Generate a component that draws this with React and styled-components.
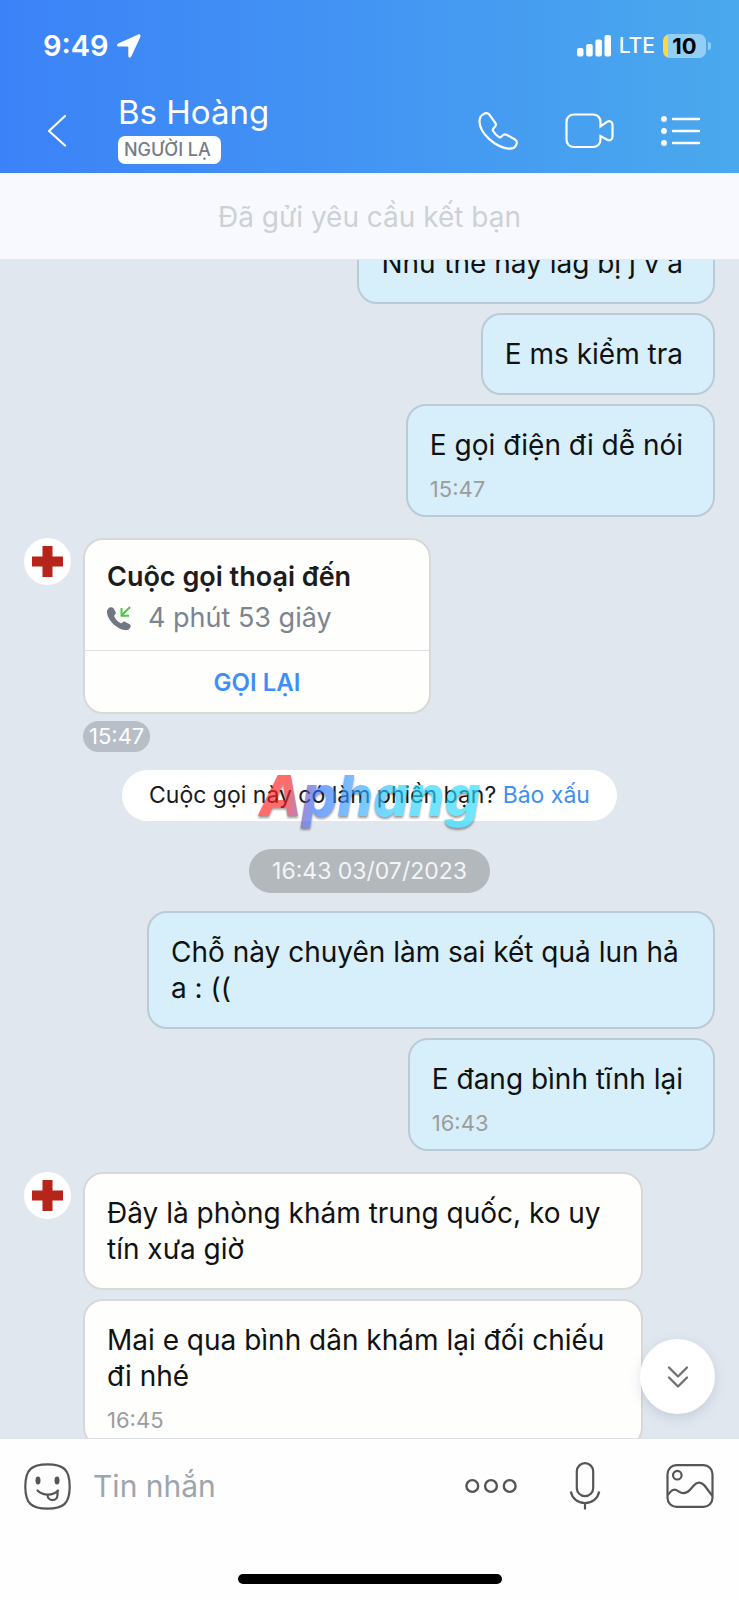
import { useLayoutEffect, useRef } from 'react';
import styled, { createGlobalStyle } from 'styled-components';

const GlobalStyle = createGlobalStyle`
    * {
        box-sizing: border-box;
    }
    body {
        margin: 0;
        font-family: Inter, "Noto Sans", sans-serif;
        background: #fefefe;
    }
    button, input {
        font-family: inherit;
    }
`;

const Screen = styled.div`
    display: flex;
    flex-direction: column;
    height: 100vh;
    overflow: hidden;
`;

const Header = styled.header`
    background: linear-gradient(90deg, #3b82f8 0%, #4395f3 50%, #4aa9ed 100%);
    color: white;
`;

const StatusBar = styled.div`
    display: flex;
    align-items: center;
    justify-content: space-between;
    height: 88px;
    padding: 3px 28px 0 43px;
`;

const StatusGroup = styled.div`
    display: flex;
    align-items: center;
    gap: 8px;
`;

const Clock = styled.span`
    font-size: 29px;
    font-weight: 600;
`;

const Network = styled.span`
    font-size: 21px;
    font-weight: 500;
`;

const Battery = styled.span`
    position: relative;
    display: flex;
    align-items: center;
    justify-content: center;
    width: 43px;
    height: 24px;
    margin-right: 5px;
    border-radius: 7px;
    background: linear-gradient(90deg, #fcd844 5px, #93cff4 5px);
    color: black;
    font-size: 22px;
    font-weight: 700;

    &::after {
        content: "";
        position: absolute;
        right: -5px;
        top: 8px;
        width: 3px;
        height: 8px;
        border-radius: 0 3px 3px 0;
        background: #93cff4;
    }
`;

const NavBar = styled.div`
    display: flex;
    align-items: center;
    height: 85px;
    padding: 0 38px 0 46px;
`;

const IconButton = styled.button`
    display: flex;
    padding: 0;
    border: none;
    background: none;
    color: inherit;
    cursor: pointer;
`;

const TitleBlock = styled.div`
    flex: 1;
    display: flex;
    flex-direction: column;
    align-items: flex-start;
    gap: 2px;
    margin-left: 50px;
    padding-bottom: 7px;
`;

const Title = styled.h1`
    margin: 0;
    font-size: 33px;
    line-height: 44px;
    font-weight: 400;
`;

const Badge = styled.span`
    padding: 0 10px 0 6px;
    border-radius: 7px;
    background: white;
    color: #767c86;
    font-size: 18px;
    line-height: 28px;
    font-weight: 500;
`;

const NavActions = styled.div`
    display: flex;
    align-items: center;
    gap: 47px;
`;

const RequestBanner = styled.div`
    padding: 26px 0 24px;
    border-bottom: 1px solid #e6e8ec;
    background: #f8f9fe;
    color: #ccd1d5;
    font-size: 28px;
    line-height: 36px;
    text-align: center;
`;

const ChatArea = styled.main`
    position: relative;
    flex: 1;
    min-height: 0;
    background: #e1e7ef;
`;

const MessageList = styled.div`
    display: flex;
    flex-direction: column;
    gap: 21px;
    height: 100%;
    padding: 0 24px 24px;
    overflow-y: auto;
    scrollbar-width: none;
`;

const Group = styled.section`
    flex: none;
    display: flex;
    align-items: flex-start;
    gap: 12px;
`;

const Stack = styled.div`
    flex: 1;
    display: flex;
    flex-direction: column;
    align-items: ${props => props.$mine ? 'flex-end' : 'flex-start'};
    gap: ${props => props.$tight ? '7px' : '9px'};
`;

const Bubble = styled.div`
    max-width: ${props => props.$mine ? '568px' : '560px'};
    padding: 21px 30px ${props => props.$timed ? '14px' : '21px'} 22px;
    border: 2px solid ${props => props.$mine ? '#b9cbd5' : '#d8d8d8'};
    border-radius: 20px;
    background: ${props => props.$mine ? '#d6effb' : '#fefefd'};
    color: #111;
`;

const MessageText = styled.p`
    margin: 0;
    font-size: 28px;
    line-height: 36px;
`;

const Time = styled.time`
    display: block;
    margin-top: 14px;
    color: #9c9c9c;
    font-size: 22px;
    line-height: 24px;
`;

const Avatar = styled.div`
    display: flex;
    align-items: center;
    justify-content: center;
    width: 47px;
    height: 47px;
    border-radius: 50%;
    background: white;
`;

const CallCard = styled.div`
    width: 348px;
    border: 2px solid #d8d8d8;
    border-radius: 20px;
    background: #fefefd;
    overflow: hidden;
`;

const CallInfo = styled.div`
    padding: 17px 22px 11px;
`;

const CallTitle = styled.h2`
    margin: 0;
    color: #1c1c1c;
    font-size: 27px;
    line-height: 40px;
    font-weight: 600;
`;

const CallLength = styled.p`
    display: flex;
    align-items: center;
    gap: 17px;
    margin: 0;
    color: #7d848e;
    font-size: 27px;
    line-height: 42px;
`;

const CallBack = styled.button`
    display: block;
    width: 100%;
    padding: 2px 0 0;
    border: none;
    border-top: 1px solid #dcdfe3;
    background: none;
    color: #3e8ff5;
    font-size: 24px;
    line-height: 59px;
    font-weight: 600;
    cursor: pointer;
`;

const TimeChip = styled.time`
    padding: 0 6px;
    border-radius: 16px;
    background: #b7bec7;
    color: white;
    font-size: 22px;
    line-height: 31px;
`;

const Notice = styled.div`
    flex: none;
    display: flex;
    flex-direction: column;
    align-items: center;
    gap: 28px;
    margin: -3px 0;
`;

const ReportPill = styled.p`
    position: relative;
    margin: 0;
    padding: 0 27px;
    border-radius: 26px;
    background: white;
    color: #1a1a1a;
    font-size: 23px;
    line-height: 51px;
`;

const ReportLink = styled.a`
    color: #3e8ff5;
    text-decoration: none;
`;

const Watermark = styled.span`
    position: absolute;
    top: -6px;
    left: 50%;
    transform: translateX(-50%);
    background: linear-gradient(100deg, #ff1f1f 14%, #2f6bff 27%, #35a5ff 45%, #22d3ff 65%, #22dcff 100%);
    background-clip: text;
    color: transparent;
    font-size: 56px;
    line-height: 64px;
    font-weight: 800;
    font-style: italic;
    opacity: 0.65;
    filter: drop-shadow(0 2px 1px rgba(0, 0, 0, 0.6));
    pointer-events: none;
`;

const DateChip = styled.time`
    padding: 0 23px;
    border-radius: 22px;
    background: #b3b8bd;
    color: #f4f5f6;
    font-size: 23px;
    line-height: 44px;
`;

const ScrollDown = styled.button`
    position: absolute;
    right: 24px;
    bottom: 24px;
    display: flex;
    align-items: center;
    justify-content: center;
    width: 75px;
    height: 75px;
    padding: 0;
    border: none;
    border-radius: 50%;
    background: white;
    color: #707070;
    box-shadow: 0 4px 12px rgba(80, 95, 130, 0.18);
    cursor: pointer;
`;

const Composer = styled.footer`
    border-top: 1px solid #dfe2e6;
    background: #fefefe;
    color: #555;
`;

const InputRow = styled.div`
    display: flex;
    align-items: center;
    height: 94px;
    padding: 0 25px 0 24px;
`;

const MessageInput = styled.input`
    flex: 1;
    min-width: 0;
    margin-left: 22px;
    padding: 0;
    border: none;
    outline: none;
    background: none;
    color: #111;
    font-size: 30px;
    line-height: 40px;

    &::placeholder {
        color: #9da5ad;
        opacity: 1;
    }
`;

const ComposerActions = styled.div`
    display: flex;
    align-items: center;
    gap: 52px;
`;

const PhotoButton = styled(IconButton)`
    margin-left: 65px;
`;

const HomeIndicator = styled.div`
    width: 264px;
    height: 10px;
    margin: 41px auto 16px;
    border-radius: 5px;
    background: black;
`;

function CrossAvatar() {
    return (
        <Avatar>
            <svg width="31" height="31" viewBox="0 0 31 31" aria-hidden="true">
                <path d="M10.5 0h10v10.5H31v10H20.5V31h-10V20.5H0v-10h10.5z" fill="#b72419" />
            </svg>
        </Avatar>
    );
}

function Message({ text, time, mine }) {
    return (
        <Bubble $mine={mine} $timed={Boolean(time)}>
            <MessageText>{text}</MessageText>
            {time && <Time>{time}</Time>}
        </Bubble>
    );
}

function Status() {
    return (
        <StatusBar>
            <StatusGroup>
                <Clock>9:49</Clock>
                <svg width="24" height="24" viewBox="0 0 24 24" fill="currentColor" aria-hidden="true">
                    <path d="M21.2.5 1.2 9.6c-1.7.8-1.4 2.9.5 2.9h9.2c.3 0 .4.1.4.4v9.2c0 1.9 2.2 2.2 3 .5L23.4 2.7C24 1.2 22.7-.1 21.2.5z" />
                </svg>
            </StatusGroup>
            <StatusGroup>
                <svg width="34" height="22" viewBox="0 0 34 22" fill="currentColor" aria-hidden="true">
                    <rect x="0" y="13" width="6.5" height="8.5" rx="2" />
                    <rect x="9.2" y="9" width="6.5" height="12.5" rx="2" />
                    <rect x="18.4" y="4.5" width="6.5" height="17" rx="2" />
                    <rect x="27.5" y="0" width="6.5" height="21.5" rx="2" />
                </svg>
                <Network>LTE</Network>
                <Battery>10</Battery>
            </StatusGroup>
        </StatusBar>
    );
}

function ChatHeader() {
    return (
        <Header>
            <Status />
            <NavBar>
                <IconButton aria-label="Quay lại">
                    <svg width="22" height="34" viewBox="0 0 22 34" fill="none" stroke="currentColor" strokeWidth="2.2" strokeLinecap="round" strokeLinejoin="round">
                        <path d="M19 2 3 17l16 14.5" />
                    </svg>
                </IconButton>
                <TitleBlock>
                    <Title>Bs Hoàng</Title>
                    <Badge>NGƯỜI LẠ</Badge>
                </TitleBlock>
                <NavActions>
                    <IconButton aria-label="Gọi thoại">
                        <svg width="40" height="38" viewBox="0 0 40 38" fill="none" stroke="currentColor" strokeWidth="2.2" strokeLinejoin="round">
                            <path d="M11.5 2.8l5.8 8c.9 1.3.8 2.6-.2 3.8l-1.7 1.9c-.7.8-.8 1.6-.3 2.5 1.400 2.300 3.300 4.400 5.600 5.900 .9.600 1.800.5 2.600-.2l1.500-1.500c1.100-1 2.400-1.200 3.800-.4l8 4.500c2.300 1.300 2.700 3.300 1.700 5.500-1.400 3-4 4.200-7.600 3.800C16.500 35 1.500 20.500 1.500 9.500c0-3.200 1.300-5.900 4-7.400 2.300-1.300 4.500-1 6 .7z" />
                        </svg>
                    </IconButton>
                    <IconButton aria-label="Gọi video">
                        <svg width="49" height="36" viewBox="0 0 49 36" fill="none" stroke="currentColor" strokeWidth="2.2" strokeLinejoin="miter">
                            <path d="M35.5 13.5V9c0-4.5-3.2-7.5-7.500-7.500H9C4.700 1.500 1.500 4.500 1.500 9v17.500c0 4.500 3.200 7.500 7.500 7.500h19c4.300 0 7.500-3 7.500-7.500V23l6.800 3.800c2.500 1.300 5.200-.1 5.200-3V11.700c0-2.900-2.700-4.300-5.200-3z" />
                        </svg>
                    </IconButton>
                    <IconButton aria-label="Tùy chọn">
                        <svg width="40" height="30" viewBox="0 0 40 30" fill="currentColor" stroke="currentColor" strokeWidth="2.4" strokeLinecap="round">
                            <g stroke="none">
                                <circle cx="3" cy="3" r="2.9" />
                                <circle cx="3" cy="15" r="2.9" />
                                <circle cx="3" cy="27" r="2.9" />
                            </g>
                            <path d="M12 3h26M12 15h26M12 27h26" />
                        </svg>
                    </IconButton>
                </NavActions>
            </NavBar>
        </Header>
    );
}

function IncomingCall() {
    return (
        <CallCard>
            <CallInfo>
                <CallTitle>Cuộc gọi thoại đến</CallTitle>
                <CallLength>
                    <svg width="24" height="25" viewBox="0 0 24 25" aria-hidden="true">
                        <path d="M6.5 2.3 8.6 6c.6 1.2.2 1.9-.7 2.700-.8.7-.9 1.300-.4 2.300 1.200 2.500 3.200 4.700 5.900 6 .9.4 1.500.3 2.200-.5.9-1 1.700-1.200 2.800-.6l4.300 2.400c1 .6 1.200 1.500.8 2.600-1 2.500-3 3.500-5.600 3.200C9 23.100-.5 12.500 0 5.600.2 3.300 1.400 1.800 3.500 1.300c1.300-.3 2.300 0 3 1z" fill="#6f7781" />
                        <path d="M23 1l-8.500 8.500M14.500 2v7.700H22" fill="none" stroke="#4cc93f" strokeWidth="2" />
                    </svg>
                    4 phút 53 giây
                </CallLength>
            </CallInfo>
            <CallBack>GỌI LẠI</CallBack>
        </CallCard>
    );
}

function ChatComposer() {
    return (
        <Composer>
            <InputRow>
                <IconButton aria-label="Biểu cảm">
                    <svg width="47" height="47" viewBox="0 0 47 47" fill="none" stroke="currentColor" strokeWidth="2.2" strokeLinecap="round">
                        <path d="M23.5 1.3C8 1.3 1.3 6 1.3 23.5S8 45.7 23.5 45.7 45.7 41 45.7 23.5 39 1.3 23.5 1.3z" />
                        <ellipse cx="14" cy="17.5" rx="2.5" ry="4" fill="currentColor" stroke="none" />
                        <ellipse cx="33" cy="17.5" rx="2.5" ry="4" fill="currentColor" stroke="none" />
                        <path d="M13.500 27.500c5.500 5.500 15.500 5.500 20.500 0M23.500 32c.2 6.800 10 6.600 10 0v-4" />
                    </svg>
                </IconButton>
                <MessageInput type="text" placeholder="Tin nhắn" aria-label="Tin nhắn" />
                <ComposerActions>
                    <IconButton aria-label="Thêm">
                        <svg width="52" height="16" viewBox="0 0 52 16" fill="none" stroke="currentColor" strokeWidth="2.4">
                            <circle cx="7.3" cy="8" r="5.9" />
                            <circle cx="26" cy="8" r="5.9" />
                            <circle cx="44.7" cy="8" r="5.9" />
                        </svg>
                    </IconButton>
                    <IconButton aria-label="Ghi âm">
                        <svg width="32" height="48" viewBox="0 0 32 48" fill="none" stroke="currentColor" strokeWidth="2.2">
                            <rect x="7.8" y="1.2" width="16.4" height="33" rx="8.2" />
                            <path d="M1.800 29.500c1.200 6.800 7 11.500 14.200 11.500s13-4.700 14.200-11.500M16 41v6.500" />
                        </svg>
                    </IconButton>
                </ComposerActions>
                <PhotoButton aria-label="Gửi ảnh">
                    <svg width="48" height="44" viewBox="0 0 48 44" fill="none" stroke="currentColor" strokeWidth="2.2">
                        <rect x="1.5" y="1.2" width="45" height="41.6" rx="9" />
                        <circle cx="11.3" cy="11.2" r="4.3" />
                        <path d="M2 31c4.500-7 7.500-5.800 10.500-3.700 4.200 3 7.800 2.700 11.500-1.500l4-4.500c3.500-3.900 7.500-3.300 10.500.2L46.500 32" />
                    </svg>
                </PhotoButton>
            </InputRow>
            <HomeIndicator />
        </Composer>
    );
}

function App() {
    const listRef = useRef(null);

    // open part way into the history, first bubble half under the banner
    useLayoutEffect(() => {
        listRef.current.scrollTop = 38;
    }, []);

    return (
        <Screen>
            <GlobalStyle />
            <ChatHeader />
            <RequestBanner>Đã gửi yêu cầu kết bạn</RequestBanner>
            <ChatArea>
                <MessageList ref={listRef}>
                    <Group>
                        <Stack $mine>
                            <Message mine text="Như thế này làg bị j v ả" />
                            <Message mine text="E ms kiểm tra" />
                            <Message mine text="E gọi điện đi dễ nói" time="15:47" />
                        </Stack>
                    </Group>
                    <Group>
                        <CrossAvatar />
                        <Stack $tight>
                            <IncomingCall />
                            <TimeChip>15:47</TimeChip>
                        </Stack>
                    </Group>
                    <Notice>
                        <ReportPill>
                            Cuộc gọi này có làm phiền bạn? <ReportLink href="#report">Báo xấu</ReportLink>
                            <Watermark>Aphang</Watermark>
                        </ReportPill>
                        <DateChip>16:43 03/07/2023</DateChip>
                    </Notice>
                    <Group>
                        <Stack $mine>
                            <Message mine text="Chỗ này chuyên làm sai kết quả lun hả a : ((" />
                            <Message mine text="E đang bình tĩnh lại" time="16:43" />
                        </Stack>
                    </Group>
                    <Group>
                        <CrossAvatar />
                        <Stack>
                            <Message text="Đây là phòng khám trung quốc, ko uy tín xưa giờ" />
                            <Message text="Mai e qua bình dân khám lại đối chiếu đi nhé" time="16:45" />
                        </Stack>
                    </Group>
                </MessageList>
                <ScrollDown aria-label="Xuống cuối">
                    <svg width="22" height="24" viewBox="0 0 22 24" fill="none" stroke="currentColor" strokeWidth="2.3" strokeLinecap="round" strokeLinejoin="round">
                        <path d="M2 2.5l9 9 9-9M2 12.5l9 9 9-9" />
                    </svg>
                </ScrollDown>
            </ChatArea>
            <ChatComposer />
        </Screen>
    );
}

export default App;
